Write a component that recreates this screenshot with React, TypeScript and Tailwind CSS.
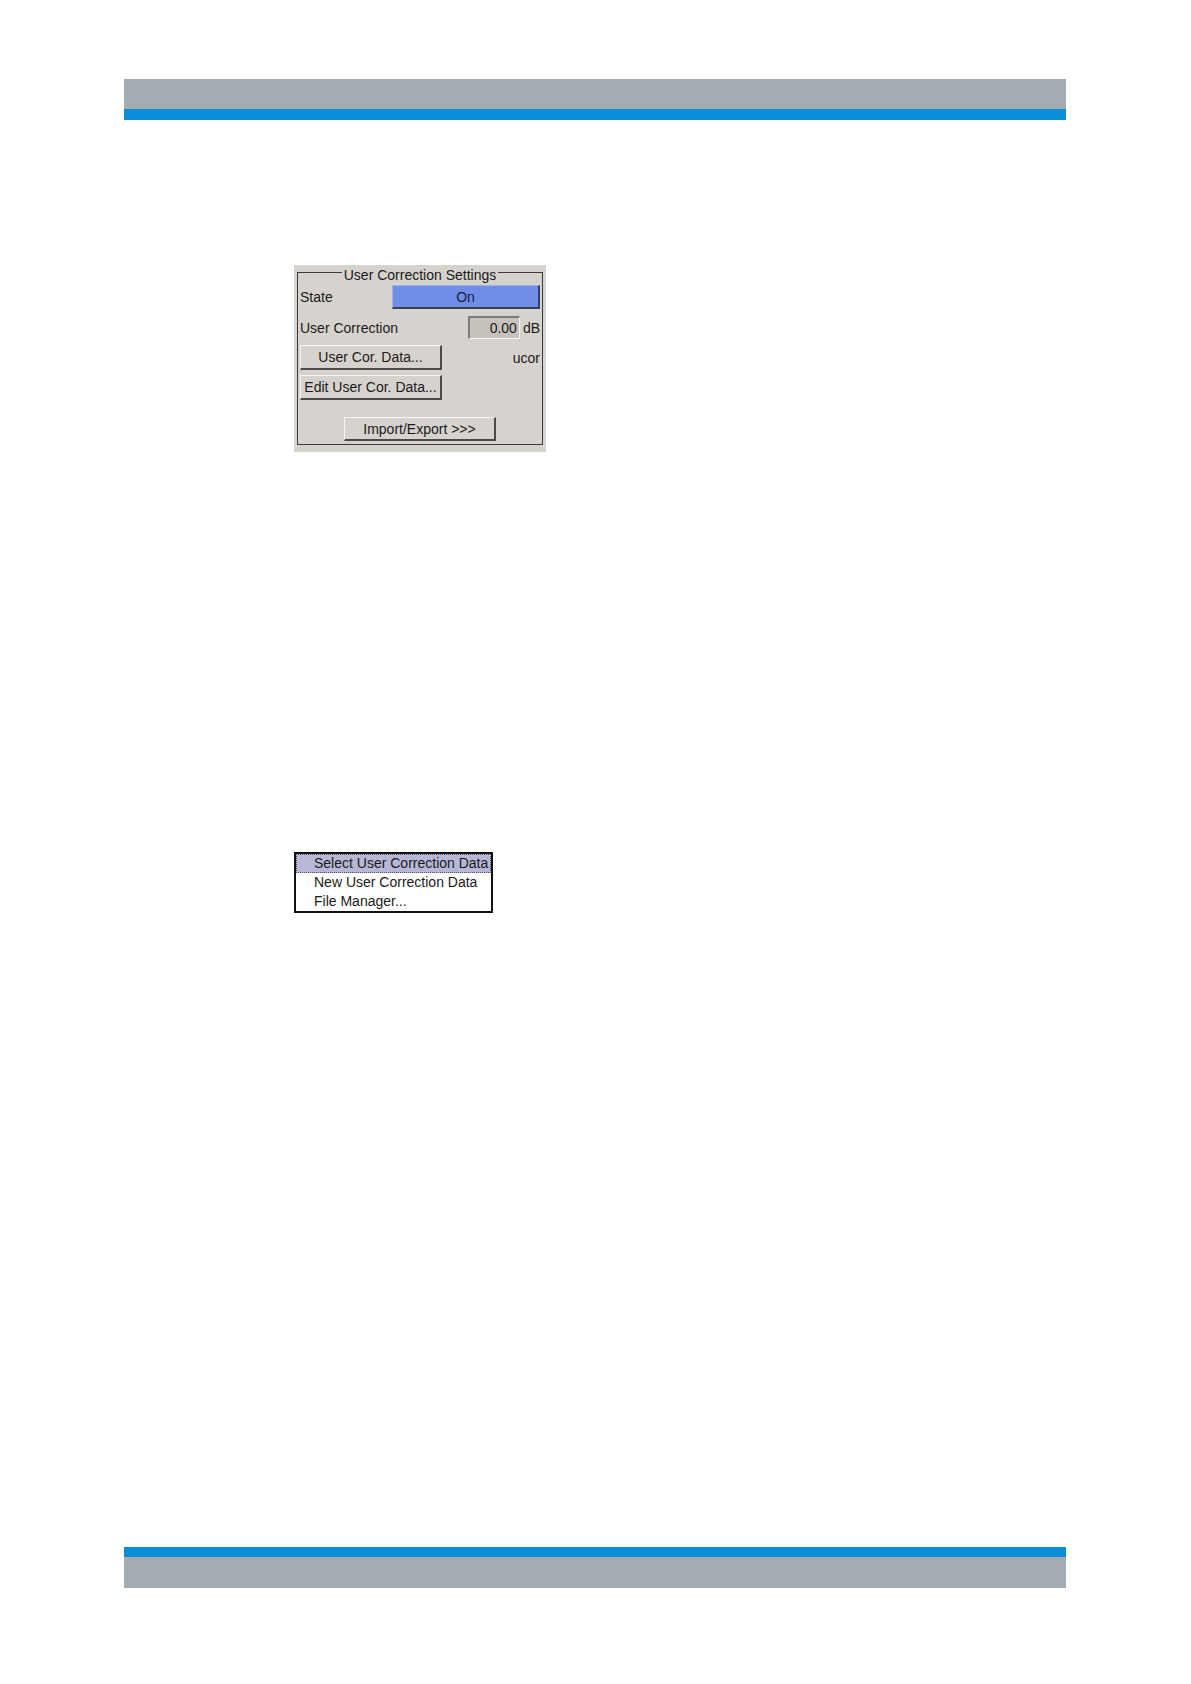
import React from "react";

const font = { fontFamily: '"Liberation Sans", Arial, sans-serif' };

function Btn({ w, children }: { w: string; children: React.ReactNode }) {
  return (
    <div
      className={`${w} h-full flex items-center justify-center bg-[#d6d3ce] border-t border-l border-[#f4f3f1] border-b-2 border-r-2 border-b-[#4a4a4a] border-r-[#4a4a4a] text-[14px] leading-none text-[#1a1a1a]`}
    >
      {children}
    </div>
  );
}

export default function App() {
  return (
    <div className="w-[1191px] h-[1684px] bg-white flex flex-col" style={font}>
      {/* header */}
      <div className="mt-[79px] ml-[124px] w-[942px] flex flex-col">
        <div className="h-[30px] bg-[#a3acb0]" />
        <div className="h-[11px] bg-[#0b8dd5]" />
      </div>

      {/* settings panel */}
      <div className="mt-[145px] ml-[294px] w-[252px] h-[187px] bg-[#d6d3ce] px-[3px] pt-[7px] pb-[7px] flex">
        <div className="relative flex-1 border border-[#3a3a3a] px-[2px] pt-[12px] pb-[3px] flex flex-col">
          <div className="absolute top-[-6px] left-0 right-0 flex justify-center">
            <span className="bg-[#d6d3ce] px-[2px] text-[14px] leading-[16px] text-[#1a1a1a]">
              User Correction Settings
            </span>
          </div>
          <div className="h-[24px] flex items-center justify-between">
            <span className="text-[14px] text-[#1a1a1a] leading-none">State</span>
            <div className="w-[148px] h-full flex items-center justify-center bg-[#6f8fe6] border-t border-l border-[#9fb3ee] border-b-2 border-r-2 border-b-[#3a3f5a] border-r-[#3a3f5a] text-[14px] leading-none text-[#1a1a3a]">
              On
            </div>
          </div>
          <div className="mt-[7px] h-[23px] flex items-center justify-between">
            <span className="text-[14px] text-[#1a1a1a] leading-none">User Correction</span>
            <div className="h-full flex items-center gap-[3px]">
              <div className="w-[52px] h-full flex items-center justify-end pr-[2px] bg-[#c6c2bb] border-t-2 border-l-2 border-[#7c7c7c] border-b border-r border-b-[#f4f3f1] border-r-[#f4f3f1] text-[14px] leading-none text-[#1a1a1a]">
                0.00
              </div>
              <span className="text-[14px] leading-none text-[#1a1a1a]">dB</span>
            </div>
          </div>
          <div className="mt-[6px] h-[25px] flex items-center justify-between">
            <Btn w="w-[142px]">User Cor. Data...</Btn>
            <span className="text-[14px] leading-none text-[#1a1a1a]">ucor</span>
          </div>
          <div className="mt-[5px] h-[25px] flex items-center">
            <Btn w="w-[142px]">Edit User Cor. Data...</Btn>
          </div>
          <div className="mt-[17px] h-[24px] flex justify-center">
            <Btn w="w-[152px]">Import/Export &gt;&gt;&gt;</Btn>
          </div>
        </div>
      </div>

      {/* menu */}
      <div className="mt-[400px] ml-[294px] w-[199px] h-[61px] border-2 border-[#111] bg-white flex flex-col text-[14px] text-[#1a1a1a]">
        <div className="h-[19px] flex items-center pl-[17px] bg-[#b7b8d8] border border-dotted border-[#555]">
          Select User Correction Data
        </div>
        <div className="h-[19px] flex items-center pl-[18px]">New User Correction Data</div>
        <div className="h-[19px] flex items-center pl-[18px]">File Manager...</div>
      </div>

      {/* footer */}
      <div className="mt-[634px] ml-[124px] w-[942px] flex flex-col">
        <div className="h-[10px] bg-[#0b8dd5]" />
        <div className="h-[31px] bg-[#a3acb0]" />
      </div>
    </div>
  );
}
